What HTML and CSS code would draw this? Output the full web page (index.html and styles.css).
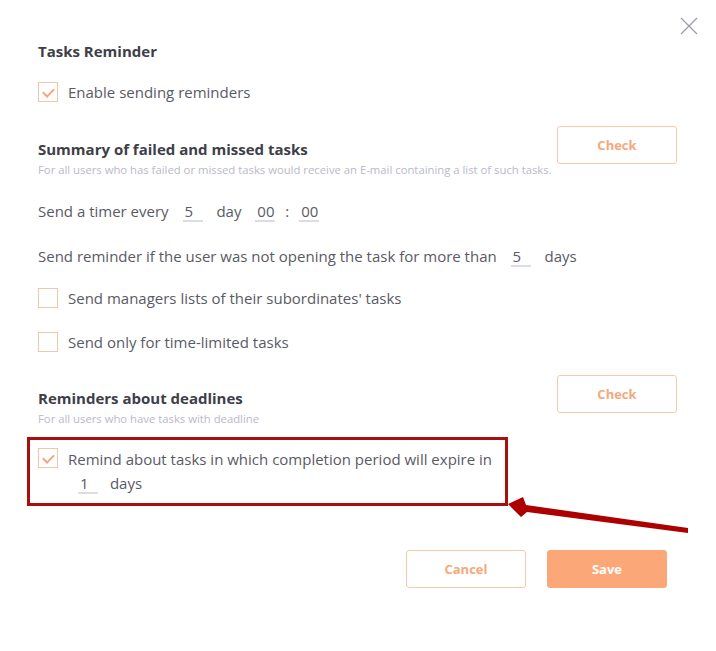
FILE: index.html
```html
<!DOCTYPE html>
<html>
	<head>
		<meta charset="UTF-8">
		<title>Tasks Reminder</title>
		<link rel="stylesheet" href="styles.css">
	</head>
	<body>
		<div class="dialog">
			<span class="close">
				<svg width="18" height="18" viewBox="0 0 18 18"><path d="M1 1L17 17M17 1L1 17" stroke="#9a9aa6" stroke-width="1.2" fill="none"/></svg>
			</span>

			<h3 class="title first">Tasks Reminder</h3>
			<label class="check_row">
				<span class="box on"></span>
				<span>Enable sending reminders</span>
			</label>

			<div class="section_head">
				<div class="head_text">
					<h3 class="title">Summary of failed and missed tasks</h3>
					<p class="hint">For all users who has failed or missed tasks would receive an E-mail containing a list of such tasks.</p>
				</div>
				<a href="javascript:;" class="btn">Check</a>
			</div>

			<div class="line timer">Send a timer every <span class="num">5</span> day <span class="num">00</span>:<span class="num">00</span></div>
			<div class="line">Send reminder if the user was not opening the task for more than <span class="num">5</span> days</div>

			<label class="check_row gap">
				<span class="box"></span>
				<span>Send managers lists of their subordinates' tasks</span>
			</label>
			<label class="check_row gap next">
				<span class="box"></span>
				<span>Send only for time-limited tasks</span>
			</label>

			<div class="section_head second">
				<div class="head_text">
					<h3 class="title">Reminders about deadlines</h3>
					<p class="hint">For all users who have tasks with deadline</p>
				</div>
				<a href="javascript:;" class="btn">Check</a>
			</div>

			<div class="mark">
				<label class="check_row wrap">
					<span class="box on"></span>
					<span class="long">Remind about tasks in which completion period will expire in<br><span class="num first_num">1</span> days</span>
				</label>
			</div>

			<div class="footer">
				<a href="javascript:;" class="btn">Cancel</a>
				<a href="javascript:;" class="btn fill">Save</a>
			</div>

			<svg class="arrow" width="716" height="651" viewBox="0 0 716 651">
				<polygon points="508,504 523,497 526,505 688,528 688,533 527,512 521,517" fill="#ad0000"/>
			</svg>
		</div>
	</body>
</html>
```

FILE: styles.css
```css
* {
	margin: 0px;
	padding: 0px;
	box-sizing: border-box;
}
body {
	background: #fff;
	font-family: "Open Sans", "Noto Sans", sans-serif;
	font-size: 15px;
	color: #5a5a65;
}
.dialog {
	position: relative;
	width: 716px;
	height: 651px;
	padding: 41px 39px 0 38px;
}
.close {
	position: absolute;
	top: 17px;
	right: 18px;
	width: 18px;
	height: 18px;
}
.title {
	font-size: 15px;
	line-height: 20px;
	font-weight: 700;
	color: #3e3e48;
}
.check_row {
	display: flex;
	align-items: center;
	gap: 10px;
	height: 20px;
	margin-top: 21px;
	line-height: 20px;
}
.check_row.gap {
	margin-top: 21px;
}
.check_row.next {
	margin-top: 24px;
}
.box {
	flex: none;
	width: 20px;
	height: 20px;
	border: 1px solid #f4c6a8;
	position: relative;
}
.box.on:after {
	content: "";
	position: absolute;
	left: 6px;
	top: 3px;
	width: 5px;
	height: 9px;
	border-right: 2px solid #f3a57c;
	border-bottom: 2px solid #f3a57c;
	transform: rotate(45deg);
}
.section_head {
	display: flex;
	justify-content: space-between;
	align-items: flex-start;
	margin-top: 24px;
}
.section_head.second {
	margin-top: 23px;
}
.head_text {
	padding-top: 13px;
}
.hint {
	font-size: 11.3px;
	line-height: 22px;
	color: #b9b9c9;
}
.btn {
	display: flex;
	align-items: center;
	justify-content: center;
	width: 120px;
	height: 38px;
	border: 1px solid #f7c9ac;
	border-radius: 3px;
	color: #f6a87d;
	font-size: 13px;
	font-weight: 700;
	text-decoration: none;
	background: #fff;
}
.btn.fill {
	background: #fca777;
	border-color: #fca777;
	color: #fff;
}
.line {
	line-height: 20px;
	margin-top: 24px;
}
.line.timer {
	margin-top: 20px;
}
.num {
	display: inline-block;
	width: 20px;
	margin: 0 10px;
	padding-left: 2px;
	line-height: 18px;
	border-bottom: 2px solid #dcdce2;
}
.mark {
	width: 481px;
	height: 69px;
	margin: 7px 0 0 -11px;
	padding: 8px 0 0 8px;
	border: 3px solid #a80f0f;
}
.check_row.wrap {
	margin-top: 0;
	align-items: flex-start;
	height: auto;
}
.long {
	line-height: 24px;
	margin-top: -1px;
}
.first_num {
	margin-right: 8px;
}
.footer {
	display: flex;
	justify-content: flex-end;
	gap: 21px;
	margin-top: 44px;
	padding-right: 10px;
}
.arrow {
	position: absolute;
	left: 0;
	top: 0;
	pointer-events: none;
}
```
